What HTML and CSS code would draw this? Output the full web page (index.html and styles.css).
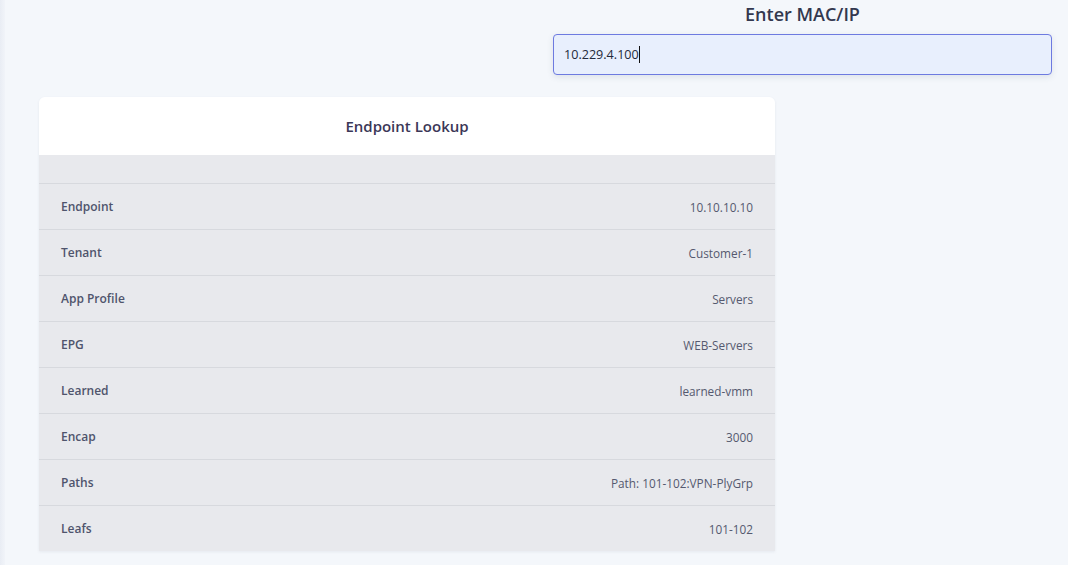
FILE: index.html
```html
<!DOCTYPE html>
<html>
<head>
<meta charset="utf-8">
<link rel="stylesheet" href="styles.css">
</head>
<body>
<div class="edge"></div>
<main class="page">
  <section class="search">
    <h2 class="search-title">Enter MAC/IP</h2>
    <div class="search-input"><span class="val">10.229.4.100</span><span class="caret"></span></div>
  </section>
  <section class="card">
    <div class="card-header">Endpoint Lookup</div>
    <div class="card-body">
      <div class="spacer"></div>
      <div class="row"><span class="label">Endpoint</span><span class="value">10.10.10.10</span></div>
      <div class="row"><span class="label">Tenant</span><span class="value">Customer-1</span></div>
      <div class="row"><span class="label">App Profile</span><span class="value">Servers</span></div>
      <div class="row"><span class="label">EPG</span><span class="value">WEB-Servers</span></div>
      <div class="row"><span class="label">Learned</span><span class="value">learned-vmm</span></div>
      <div class="row"><span class="label">Encap</span><span class="value">3000</span></div>
      <div class="row"><span class="label">Paths</span><span class="value">Path: 101-102:VPN-PlyGrp</span></div>
      <div class="row"><span class="label">Leafs</span><span class="value">101-102</span></div>
    </div>
  </section>
</main>
</body>
</html>
```
FILE: styles.css
```css
html, body {
  margin: 0;
  padding: 0;
  height: 100%;
  overflow: hidden;
}
body {
  background: #f4f7fb;
  font-family: "Open Sans", "Noto Sans", sans-serif;
  color: #3c4b64;
  position: relative;
}
.edge {
  position: absolute;
  left: 0;
  top: 0;
  bottom: 0;
  width: 5px;
  background: linear-gradient(to right, #e9edf4, #f1f4f9);
}
.page {
  display: flex;
  flex-direction: column;
  padding-left: 39px;
}
.search {
  align-self: flex-end;
  width: 499px;
  margin-right: 16px;
  display: flex;
  flex-direction: column;
  align-items: center;
}
.search-title {
  margin: 2px 0 0;
  font-size: 18px;
  font-weight: 600;
  line-height: 24px;
  color: #33384f;
}
.search-input {
  margin-top: 8px;
  box-sizing: border-box;
  width: 100%;
  height: 41px;
  border: 1px solid #6d7ae0;
  border-radius: 4px;
  background: #e8effd;
  box-shadow: 0 2px 6px rgba(60, 75, 100, 0.12);
  display: flex;
  align-items: center;
  padding-left: 10px;
  font-size: 12.6px;
  color: #232a3b;
}
.caret {
  display: inline-block;
  width: 1px;
  height: 17px;
  background: #111;
}
.card {
  margin-top: 22px;
  width: 736px;
  border-radius: 6px 6px 0 0;
  overflow: hidden;
  box-shadow: 0 1px 3px rgba(60, 75, 100, 0.08);
}
.card-header {
  background: #fff;
  height: 58px;
  display: flex;
  align-items: center;
  justify-content: center;
  font-size: 15px;
  font-weight: 600;
  color: #3b3757;
}
.card-body {
  background: #e8e9ed;
}
.spacer {
  height: 28px;
}
.row {
  height: 45px;
  border-top: 1px solid #d7d9de;
  display: flex;
  align-items: center;
  justify-content: space-between;
  padding: 0 22px;
  font-size: 12px;
}
.label {
  font-weight: 600;
  color: #4f546c;
}
.value {
  font-size: 11.8px;
  color: #55596f;
}
```
